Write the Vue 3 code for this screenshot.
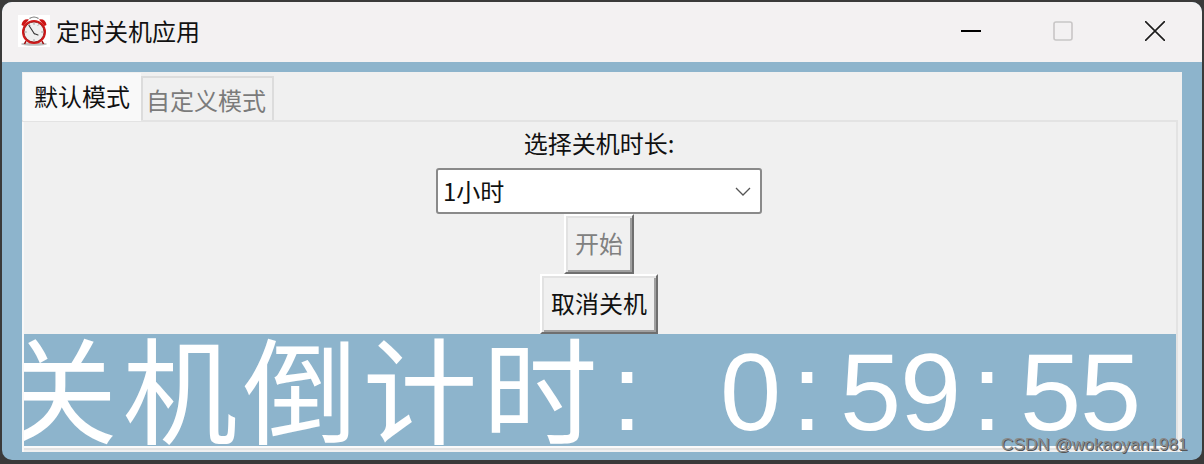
<script setup>
const tabs = [
  { label: '默认模式', active: true },
  { label: '自定义模式', active: false }
]
const countdown = Array.from('关机倒计时: 0:59:55').map((ch) => ({
  ch: ch === ' ' ? '\u00a0' : ch,
  wide: ch.charCodeAt(0) > 255
}))
</script>

<template>
  <div class="screen">
    <div class="window">
      <header class="titlebar">
        <svg class="app-icon" viewBox="0 0 32 32">
          <rect width="32" height="32" fill="#fff" />
          <ellipse cx="16" cy="29" rx="13" ry="1.8" fill="#8a8a8a" opacity=".55" />
          <path d="M11.5 3.5 Q16 0.5 20.5 3.5" fill="none" stroke="#777" stroke-width="1.1" />
          <path d="M3.5 10 Q4.5 3.5 11 4.5 L5.5 11 Z" fill="#cc1616" />
          <path d="M28.5 10 Q27.5 3.5 21 4.5 L26.5 11 Z" fill="#cc1616" />
          <path d="M8 26 L6.5 29 M24 26 L25.5 29" stroke="#a01010" stroke-width="1.6" />
          <circle cx="16" cy="17" r="12" fill="#d21a1a" />
          <circle cx="16" cy="17" r="10" fill="#efefef" stroke="#8c0f0f" stroke-width=".7" />
          <path d="M16 8v1.8M16 24.2v1.8M7 17h1.8M23.2 17h1.8M11.5 9.5l.7 1.2M20.5 9.5l-.7 1.2" stroke="#888" stroke-width=".8" />
          <path d="M11 10.5 L16.5 19 M16 18.5 L20 20" stroke="#333" stroke-width="1.1" stroke-linecap="round" />
        </svg>
        <span class="title">定时关机应用</span>
        <div class="controls">
          <span class="control">
            <svg viewBox="0 0 20 20"><path d="M0 10h20" stroke="#000" stroke-width="2" /></svg>
          </span>
          <span class="control">
            <svg viewBox="0 0 20 20"><rect x="1" y="1" width="18" height="18" rx="2" fill="none" stroke="#c8c6c6" stroke-width="1.6" /></svg>
          </span>
          <span class="control">
            <svg viewBox="0 0 20 20"><path d="M0 0L20 20M20 0L0 20" stroke="#1c1c1c" stroke-width="1.6" /></svg>
          </span>
        </div>
      </header>

      <main class="body">
        <div class="panel">
          <div class="tabs">
            <div v-for="tab in tabs" :key="tab.label" class="tab" :class="{ active: tab.active }">{{ tab.label }}</div>
          </div>
          <section class="pane">
            <label class="prompt">选择关机时长:</label>
            <div class="combo">
              <span>1小时</span>
              <svg viewBox="0 0 16 9"><path d="M1 1l7 7 7-7" fill="none" stroke="#555" stroke-width="1.3" /></svg>
            </div>
            <button class="btn start" type="button" disabled>开始</button>
            <button class="btn cancel" type="button">取消关机</button>
            <div class="countdown">
              <div class="countdown-row">
                <span v-for="(c, i) in countdown" :key="i" class="cell" :class="c.wide ? 'wide' : 'narrow'">{{ c.ch }}</span>
              </div>
            </div>
          </section>
        </div>
      </main>
    </div>
    <span class="watermark">CSDN @wokaoyan1981</span>
  </div>
</template>

<style>
html, body { margin: 0; background: #3a3a3a; }
</style>

<style scoped>
.screen {
  position: relative;
  width: 1204px;
  height: 464px;
  box-sizing: border-box;
  padding: 2px 2px 4px;
  background: #3a3a3a;
  font-family: "Noto Sans CJK SC", "Liberation Sans", sans-serif;
  overflow: hidden;
}
.window {
  height: 100%;
  display: flex;
  flex-direction: column;
  border-radius: 10px;
  overflow: hidden;
  background: #8db4cc;
}
.titlebar {
  height: 60px;
  flex: none;
  display: flex;
  align-items: center;
  background: #f3f1f2;
  padding-left: 16px;
}
.app-icon { width: 32px; height: 32px; margin-top: -3px; }
.title { margin: -2px 0 0 6px; font-size: 24px; line-height: 1; color: #111; }
.controls { margin-left: auto; display: flex; margin-right: 1px; margin-top: -2px; }
.control {
  width: 92px;
  height: 60px;
  display: flex;
  align-items: center;
  justify-content: center;
}
.control svg { width: 20px; height: 20px; }
.body { flex: 1; padding: 10px 20px 8px; min-height: 0; }
.panel {
  height: 100%;
  box-sizing: border-box;
  background: #f0f0f0;
  padding: 1px 4px 0 0;
  display: flex;
  flex-direction: column;
}
.tabs { display: flex; align-items: flex-end; height: 47px; flex: none; position: relative; z-index: 1; margin-left: 1px; }
.tab {
  font-size: 24px;
  line-height: 1;
  box-sizing: border-box;
  color: #7b7b7b;
  height: 44px;
  width: 133px;
  padding: 10px 0 0 3px;
  background: #f0f0f0;
  border: 2px solid #dcdcdc;
  border-bottom: 0;
}
.tab.active {
  color: #111;
  width: 118px;
  height: 48px;
  margin-bottom: -1px;
  padding: 11px 0 0 11px;
  background: #f9f9f9;
  border: 0;
}
.pane {
  flex: 1;
  min-height: 0;
  border: 2px solid #e3e3e3;
  border-width: 2px 2px 0 0;
  box-shadow: inset 2px 0 0 #f8f8f8, inset 0 -2px 0 #f0f0f0, inset 0 -4px 0 #e3e3e3, inset 0 -6px 0 #fafafa;
  display: flex;
  flex-direction: column;
  align-items: center;
}
.prompt { font-size: 24px; line-height: 42px; height: 46px; color: #111; }
.combo {
  width: 326px;
  height: 46px;
  flex: none;
  box-sizing: border-box;
  border: 2px solid #8a8a8a;
  border-radius: 3px;
  background: #fff;
  display: flex;
  align-items: center;
  justify-content: space-between;
  padding: 0 9px 2px 5px;
  font-size: 24px;
  color: #111;
}
.combo svg { width: 16px; height: 9px; margin-top: 3px; }
.btn {
  display: block;
  flex: none;
  margin: 0;
  font: inherit;
  font-size: 24px;
  line-height: 1;
  padding: 0 0 3px;
  background: #f0f0f0;
  border: 2px solid;
  border-color: #fff #6f6f6f #6f6f6f #fff;
  box-shadow: inset 2px 2px 0 #e2e2e2, inset -2px -2px 0 #a0a0a0;
}
.start { width: 70px; height: 60px; color: #808080; }
.cancel { width: 118px; height: 60px; color: #111; }
.countdown {
  align-self: stretch;
  height: 112px;
  flex: none;
  margin-left: 2px;
  background: #8db4cc;
  color: #fff;
  overflow: hidden;
}
.countdown-row {
  display: flex;
  align-items: flex-start;
  margin: -5px 0 0 -24px;
  white-space: pre;
}
.cell { display: block; flex: none; text-align: center; box-sizing: border-box; }
.wide { width: 120px; font-size: 115px; line-height: 112px; }
.narrow {
  width: 60px;
  padding-right: 6px;
  font-family: "Liberation Sans", sans-serif;
  font-size: 110px;
  line-height: 126px;
}
.watermark {
  position: absolute;
  left: 1001px;
  top: 434px;
  font-family: "Liberation Sans", sans-serif;
  font-size: 17.2px;
  color: #8a8a8a;
  text-shadow: 1px 1px 0 #555;
}
</style>
